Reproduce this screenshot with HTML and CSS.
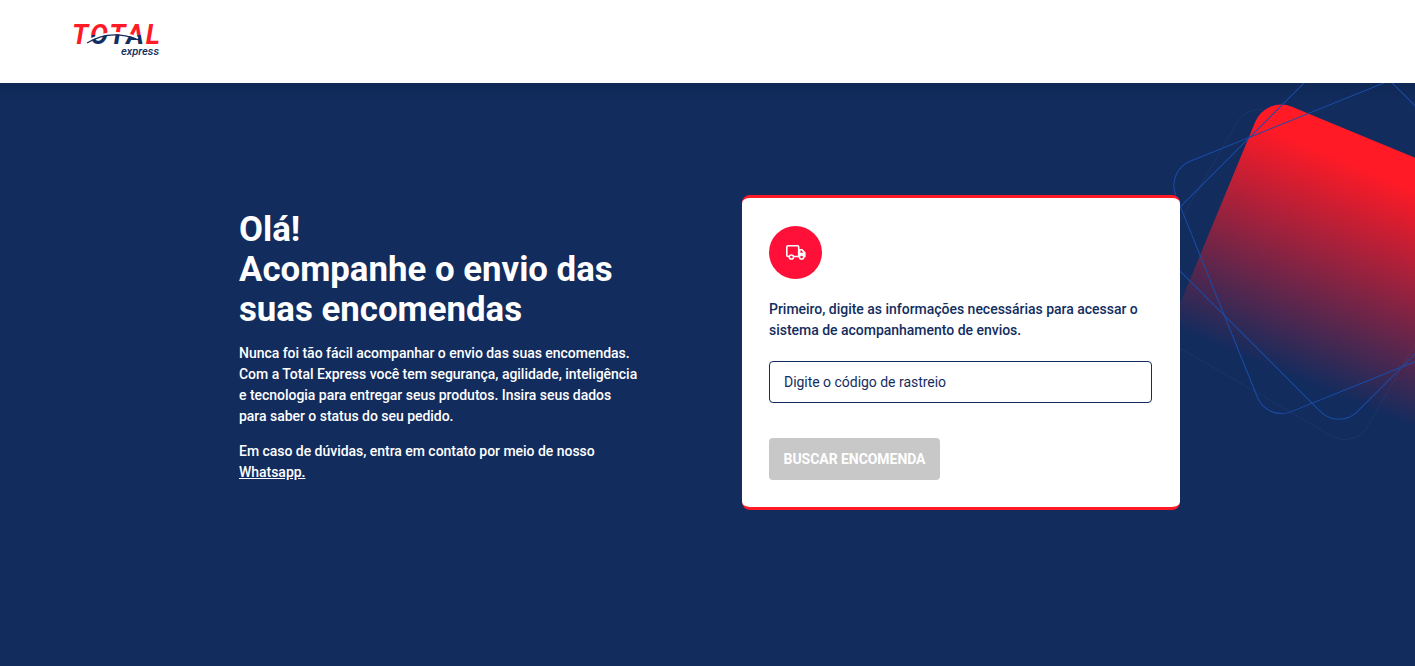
FILE: index.html
```html
<!DOCTYPE html>
<html lang="pt-BR">
<head>
    <meta charset="UTF-8">
    <meta name="viewport" content="width=device-width, initial-scale=1.0">
    <title>Total Express</title>
    <link rel="stylesheet" href="styles.css">
</head>
<body>
    <header class="topbar">
        <svg class="logo" width="90" height="36" viewBox="0 0 90 36">
            <defs>
                <linearGradient id="logoSplit" gradientUnits="userSpaceOnUse" x1="0" y1="0" x2="0" y2="20">
                    <stop offset="0.55" stop-color="#ff1a26"/>
                    <stop offset="0.55" stop-color="#132d60"/>
                </linearGradient>
            </defs>
            <text class="logo-total" x="0" y="20" textLength="88" lengthAdjust="spacing">T<tspan fill="url(#logoSplit)">OTA</tspan>L</text>
            <path class="logo-gap" d="M13 19Q38 2 66 14"/>
            <path class="logo-arc" d="M15 19Q38 5 64 15"/>
            <text class="logo-express" x="49" y="31" textLength="38" lengthAdjust="spacingAndGlyphs">express</text>
        </svg>
    </header>

    <main class="hero">
        <!-- decorative shapes behind the card -->
        <svg class="shapes" width="1415" height="583" viewBox="0 83 1415 583">
            <defs>
                <linearGradient id="redFade" x1="0" y1="0" x2="0" y2="1">
                    <stop offset="0.12" stop-color="#ff1a26"/>
                    <stop offset="1" stop-color="#ff1a26" stop-opacity="0"/>
                </linearGradient>
            </defs>
            <rect class="line-dark" width="265" height="250" rx="26" transform="translate(1250 100) rotate(30)"/>
            <rect fill="url(#redFade)" width="400" height="250" rx="28" transform="translate(1266 96) rotate(22.5)"/>
            <rect class="line-blue" width="270" height="270" rx="26" transform="translate(1166 171) rotate(-22)"/>
            <rect class="line-blue" width="283" height="270" rx="26" transform="translate(1148 239) rotate(-45)"/>
        </svg>

        <section class="intro">
            <h1>Olá!<br>Acompanhe o envio das suas encomendas</h1>
            <p>Nunca foi tão fácil acompanhar o envio das suas encomendas. Com a Total Express você tem segurança, agilidade, inteligência e tecnologia para entregar seus produtos. Insira seus dados para saber o status do seu pedido.</p>
            <p>Em caso de dúvidas, entra em contato por meio de nosso <a href="#">Whatsapp.</a></p>
        </section>

        <section class="card">
            <div class="card-icon">
                <svg width="20" height="15" viewBox="0 0 20 15">
                    <path class="truck" d="M3.2 11.5H2C1.3 11.5 .8 11 .8 10.3V2C.8 1.3 1.3 .8 2 .8H11.5C12.2 .8 12.7 1.3 12.7 2V11.5H7.5"/>
                    <path class="truck-cab" d="M12.7 4H16.4L19.6 7.4V11.5C19.6 12.1 19.2 12.4 18.6 12.4H12.7ZM14.4 5.6V7.8H17.4L15.6 5.6Z"/>
                    <circle class="truck-wheel" cx="5.4" cy="12" r="2.1"/>
                    <circle class="truck-wheel" cx="15.6" cy="12" r="2.1"/>
                </svg>
            </div>
            <p class="card-text">Primeiro, digite as informações necessárias para acessar o sistema de acompanhamento de envios.</p>
            <input class="card-input" type="text" placeholder="Digite o código de rastreio">
            <button class="card-button" disabled>BUSCAR ENCOMENDA</button>
        </section>
    </main>
</body>
</html>
```

FILE: styles.css
```css
body {
    font-family: Roboto, "Liberation Sans", sans-serif;
    margin: 0;
    height: 666px;
    overflow: hidden;
    background-color: #122c5e;
}

.topbar {
    height: 83px;
    background-color: white;
    box-sizing: border-box;
    padding: 24px 0 0 72px;
}

.logo {
    display: block;
    overflow: visible;
}

.logo-total {
    font-family: Roboto, sans-serif;
    font-size: 27px;
    font-weight: 700;
    font-style: italic;
    fill: #ff1a26;
}

.logo-gap {
    fill: none;
    stroke: white;
    stroke-width: 2;
}

.logo-arc {
    fill: none;
    stroke: #132d60;
    stroke-width: 1.2;
}

.logo-express {
    font-family: Roboto, sans-serif;
    font-size: 11px;
    font-weight: 500;
    font-style: italic;
    fill: #132d60;
}

.hero {
    position: relative;
    height: 583px;
    box-sizing: border-box;
    padding: 112px 0 0 239px;
    display: flex;
    align-items: flex-start;
    overflow: hidden;
    background: linear-gradient(#0f2855, #122c5e 20px);
}

.shapes {
    position: absolute;
    top: 0;
    left: 0;
}

.line-blue {
    fill: none;
    stroke: #1a4ca6;
    stroke-width: 1;
}

.line-dark {
    fill: none;
    stroke: #1a3468;
    stroke-width: 1;
}

.intro {
    position: relative;
    width: 400px;
    margin-top: 14px;
    margin-right: 103px;
    color: white;
}

.intro h1 {
    font-size: 34.8px;
    font-weight: 700;
    line-height: 40px;
    margin: 0 0 14px 0;
}

.intro p {
    font-size: 14px;
    font-weight: 500;
    line-height: 21px;
    letter-spacing: -0.03px;
    margin: 0 0 14px 0;
}

.intro a {
    color: white;
    font-weight: 500;
}

.card {
    position: relative;
    width: 438px;
    height: 315px;
    box-sizing: border-box;
    padding: 28px 27px 0 27px;
    background-color: white;
    border-top: 3px solid #ff1a26;
    border-bottom: 3px solid #ff1a26;
    border-radius: 8px;
}

.card-icon {
    width: 53px;
    height: 53px;
    border-radius: 50%;
    background-color: #ff1038;
    display: flex;
    align-items: center;
    justify-content: center;
}

.truck {
    fill: none;
    stroke: white;
    stroke-width: 1.6;
}

.truck-cab {
    fill: white;
    fill-rule: evenodd;
}

.truck-wheel {
    fill: #ff1038;
    stroke: white;
    stroke-width: 1.5;
}

.card-text {
    font-size: 14px;
    font-weight: 500;
    line-height: 21px;
    letter-spacing: -0.02px;
    color: #132d60;
    margin: 20px 0 20px 0;
}

.card-input {
    display: block;
    width: 383px;
    height: 42px;
    box-sizing: border-box;
    padding: 0 14px;
    border: 1px solid #132d60;
    border-radius: 4px;
    outline: none;
    font-family: Roboto, sans-serif;
    font-size: 14px;
    letter-spacing: -0.03px;
}

.card-input::placeholder {
    color: #132d60;
    opacity: 1;
}

.card-button {
    display: block;
    width: 171px;
    height: 42px;
    margin-top: 35px;
    padding: 0;
    background-color: #c8c8c8;
    color: white;
    border: none;
    border-radius: 4px;
    font-family: Roboto, sans-serif;
    font-size: 14px;
    font-weight: 700;
    letter-spacing: -0.05px;
}
```
